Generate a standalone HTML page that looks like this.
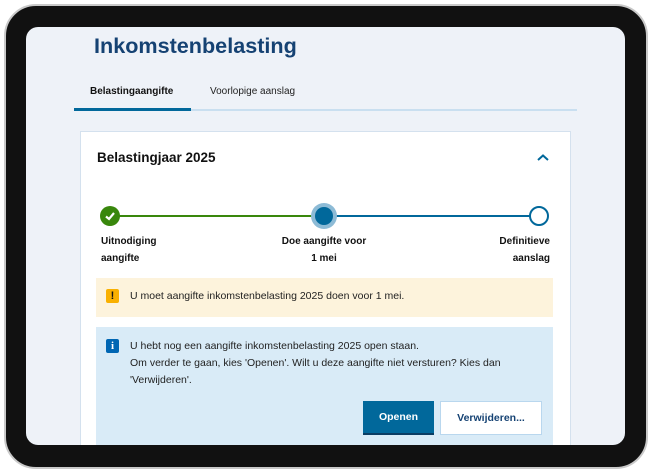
<!DOCTYPE html><html><head><style>
*{margin:0;padding:0;box-sizing:border-box}
body{width:650px;height:471px;background:#fff;position:relative;overflow:hidden;font-family:"Liberation Sans",sans-serif}
.frame{position:absolute;left:4px;top:4px;width:644px;height:465px;border-radius:32px;background:#111;border:2px solid #c9c9c9}
.screen{position:absolute;left:26px;top:27px;width:599px;height:418px;border-radius:12px;background:#eef2f8;overflow:hidden}
.a{position:absolute;white-space:nowrap}
</style></head><body>
<div class="frame"></div>
<div class="screen">
<div class="a" style="left:68px;top:6px;font-size:21.6px;font-weight:bold;color:#154273">Inkomstenbelasting</div>
<div class="a" style="left:64px;top:59px;font-size:10px;font-weight:bold;color:#111">Belastingaangifte</div>
<div class="a" style="left:184px;top:59px;font-size:10px;color:#222">Voorlopige aanslag</div>
<div class="a" style="left:48px;top:82px;width:503px;height:2px;background:#c9dff0"></div>
<div class="a" style="left:48px;top:81px;width:117px;height:3px;background:#01689b"></div>
<div class="a" style="left:54px;top:104px;width:491px;height:330px;background:#fff;border:1px solid #d4e1ee"></div>
<div class="a" style="left:71px;top:123px;font-size:13.5px;font-weight:bold;color:#111">Belastingjaar 2025</div>
<svg class="a" style="left:510px;top:126px" width="14" height="10"><path d="M2 7L7 2.5L12 7" stroke="#01689b" stroke-width="2" fill="none"/></svg>
<div class="a" style="left:84px;top:188px;width:214px;height:2px;background:#39870c"></div>
<div class="a" style="left:298px;top:188px;width:215px;height:2px;background:#01689b"></div>
<div class="a" style="left:74px;top:179px;width:20px;height:20px;border-radius:50%;background:#39870c"></div>
<svg class="a" style="left:74px;top:179px" width="20" height="20"><path d="M6 10.5L9 13L14 7" stroke="#fff" stroke-width="2.2" fill="none"/></svg>
<div class="a" style="left:285px;top:176px;width:26px;height:26px;border-radius:50%;background:#8dbbd6"></div>
<div class="a" style="left:289px;top:180px;width:18px;height:18px;border-radius:50%;background:#01689b"></div>
<div class="a" style="left:503px;top:179px;width:20px;height:20px;border-radius:50%;background:#fff;border:2px solid #01689b"></div>
<div class="a" style="left:75px;top:206px;font-size:10px;font-weight:bold;line-height:17px;color:#111">Uitnodiging<br>aangifte</div>
<div class="a" style="left:238px;top:206px;width:120px;text-align:center;font-size:10px;font-weight:bold;line-height:17px;color:#111">Doe aangifte voor<br>1 mei</div>
<div class="a" style="left:440px;top:206px;width:84px;text-align:right;font-size:10px;font-weight:bold;line-height:17px;color:#111">Definitieve<br>aanslag</div>
<div class="a" style="left:70px;top:251px;width:457px;height:39px;background:#fdf3dc"></div>
<div class="a" style="left:80px;top:262px;width:13px;height:14px;border-radius:2px;background:#f9b000;color:#111;font-size:11px;font-weight:bold;text-align:center;line-height:14px">!</div>
<div class="a" style="left:104px;top:263px;font-size:10.5px;color:#222">U moet aangifte inkomstenbelasting 2025 doen voor 1 mei.</div>
<div class="a" style="left:70px;top:300px;width:457px;height:130px;background:#d9ebf7"></div>
<div class="a" style="left:80px;top:312px;width:13px;height:14px;border-radius:2px;background:#0066b3;color:#fff;font-size:11px;font-weight:bold;text-align:center;line-height:14px;font-family:'Liberation Serif',serif">i</div>
<div class="a" style="left:104px;top:311px;font-size:10.5px;line-height:17px;color:#222">U hebt nog een aangifte inkomstenbelasting 2025 open staan.<br>Om verder te gaan, kies 'Openen'. Wilt u deze aangifte niet versturen? Kies dan<br>'Verwijderen'.</div>
<div class="a" style="left:337px;top:374px;width:71px;height:34px;background:#01689b;border-bottom:2px solid #0b3d63;color:#fff;font-size:10.5px;font-weight:bold;text-align:center;line-height:32px">Openen</div>
<div class="a" style="left:414px;top:374px;width:102px;height:34px;background:#fff;border:1px solid #b9d7ee;color:#154273;font-size:10.5px;font-weight:bold;text-align:center;line-height:32px">Verwijderen...</div>
</div>
</body></html>
